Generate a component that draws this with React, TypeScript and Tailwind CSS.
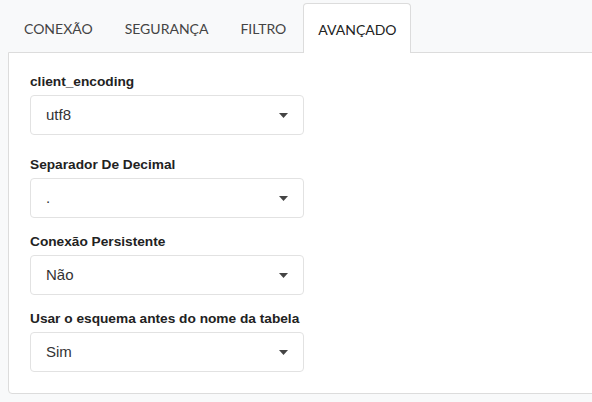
const TABS = ["CONEXÃO", "SEGURANÇA", "FILTRO", "AVANÇADO"];

const FIELDS = [
  { label: "client_encoding", value: "utf8", top: "mt-0" },
  { label: "Separador De Decimal", value: ".", top: "mt-[22px]" },
  { label: "Conexão Persistente", value: "Não", top: "mt-[16px]" },
  { label: "Usar o esquema antes do nome da tabela", value: "Sim", top: "mt-[16px]" },
];

function Caret() {
  return (
    <svg width="9" height="5" viewBox="0 0 9 5" className="fill-[#444]">
      <path d="M0 0h9L4.5 5z" />
    </svg>
  );
}

export default function App() {
  return (
    <div className="h-[402px] w-[592px] overflow-hidden bg-[#f8f9fa] pl-[8px] pt-[3px] font-['Lato','Liberation_Sans',sans-serif]">
      <div className="w-[600px]">
        <div className="flex h-[49px] items-end">
          {TABS.map((t, i) => {
            const active = i === TABS.length - 1;
            return (
              <div
                key={t}
                className={
                  active
                    ? "relative -mb-px ml-[1px] flex h-[50px] items-center rounded-t-[4px] border border-b-0 border-[#dcdcdc] bg-white pl-[14px] pr-[13px] pt-[2px] text-[14px] text-[#222]"
                    : "flex h-[49px] items-center px-[16px] pt-[2px] text-[14px] text-[#444]"
                }
              >
                {t}
              </div>
            );
          })}
        </div>
        <div className="h-[342px] rounded-bl-[4px] border border-[#dcdcdc] bg-white pl-[21px] pt-[21px] font-['Liberation_Sans',Arial,sans-serif]">
          {FIELDS.map((f) => (
            <div key={f.label} className={f.top}>
              <div className="mb-[5px] text-[13.7px] font-bold leading-[16px] text-[#222]">{f.label}</div>
              <div className="flex h-[40px] w-[274px] items-center justify-between rounded-[4px] border border-[#e2e2e2] bg-white pl-[15px] pr-[15px] text-[15px] text-[#333]">
                <span>{f.value}</span>
                <Caret />
              </div>
            </div>
          ))}
        </div>
      </div>
    </div>
  );
}
